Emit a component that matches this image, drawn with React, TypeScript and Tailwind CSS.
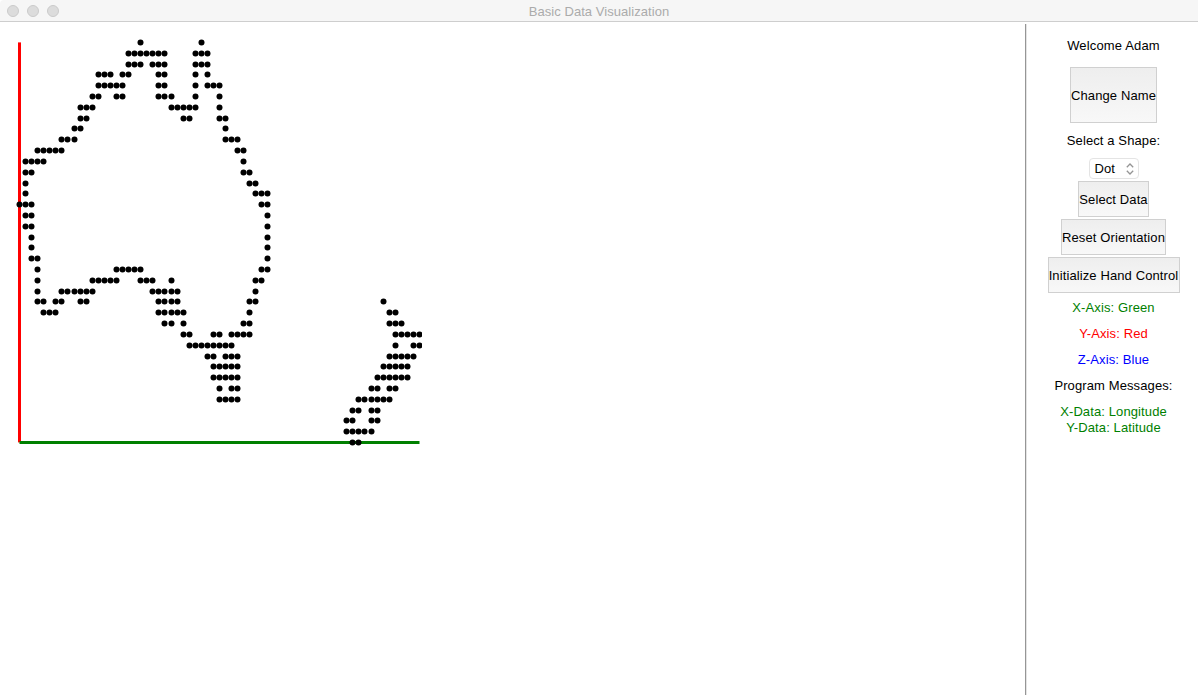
import React from "react";

// Each entry is one latitude row, listing inclusive [first, last] longitude columns.
const ROWS: number[][][] = [
  [[20, 20], [30, 30]],
  [[18, 24], [29, 31]],
  [[18, 20], [22, 24], [29, 31]],
  [[13, 15], [17, 18], [23, 24], [29, 29], [31, 31]],
  [[13, 17], [23, 24], [29, 29], [31, 33]],
  [[12, 13], [16, 17], [23, 25], [29, 29], [33, 33]],
  [[10, 12], [25, 29], [33, 33]],
  [[10, 11], [27, 28], [33, 34]],
  [[9, 10], [34, 34]],
  [[7, 9], [34, 36]],
  [[3, 7], [36, 37]],
  [[1, 4], [37, 37]],
  [[1, 2], [37, 38]],
  [[1, 1], [38, 39]],
  [[1, 1], [39, 41]],
  [[0, 2], [40, 41]],
  [[1, 2], [41, 41]],
  [[1, 2], [41, 41]],
  [[2, 2], [41, 41]],
  [[2, 2], [41, 41]],
  [[2, 3], [41, 41]],
  [[3, 3], [16, 20], [40, 41]],
  [[3, 3], [12, 16], [20, 22], [25, 25], [39, 40]],
  [[3, 3], [7, 12], [22, 26], [39, 39]],
  [[3, 4], [6, 7], [10, 11], [23, 26], [38, 39], [60, 60]],
  [[4, 6], [23, 27], [38, 38], [61, 62]],
  [[24, 25], [27, 27], [37, 38], [61, 63]],
  [[27, 28], [32, 33], [35, 38], [62, 66]],
  [[28, 35], [62, 62], [65, 66]],
  [[31, 32], [34, 36], [61, 65]],
  [[32, 36], [60, 64]],
  [[32, 36], [59, 64]],
  [[33, 33], [35, 36], [58, 59], [61, 62]],
  [[33, 36], [56, 61]],
  [[55, 56], [58, 59]],
  [[54, 55], [58, 59]],
  [[54, 58]],
  [[55, 56]],
];

const SIZE = 400;
const COLUMN_STEP = SIZE / 66;
const ROW_STEP = SIZE / 37;

function Plot() {
  return (
    <svg width="422" height="445" viewBox="0 22 422 445" className="block">
      <rect x="18" y="42.4" width="3" height="400" fill="#ff0000" />
      <rect x="19.5" y="441" width="400" height="3" fill="#008000" />
      {ROWS.flatMap((runs, row) =>
        runs.flatMap(([first, last]) =>
          Array.from({ length: last - first + 1 }, (_, i) => (
            <circle
              key={`${row}-${first + i}`}
              cx={19.5 + Math.round((first + i) * COLUMN_STEP)}
              cy={42.5 + Math.round(row * ROW_STEP)}
              r="3"
              fill="#000"
            />
          )),
        ),
      )}
    </svg>
  );
}

function PanelButton({ label, className }: { label: string; className: string }) {
  return (
    <button
      className={`flex shrink-0 items-center justify-center whitespace-nowrap border border-[#d0d0d0] bg-linear-to-b from-[#eeeeee] to-[#f8f8f8] pt-0.5 ${className}`}
    >
      {label}
    </button>
  );
}

export default function App() {
  return (
    <div className="flex h-[697px] w-[1198px] flex-col overflow-hidden bg-white font-['Liberation_Sans',Arial,sans-serif] text-[13px] leading-4 tracking-[0.11px] text-black">
      <header className="grid h-[22px] shrink-0 grid-cols-[1fr_auto_1fr] items-center rounded-tl-[4px] border-b border-[#cecece] bg-[#f6f6f6]">
        <div className="flex gap-2 pl-[7px]">
          <span className="size-3 rounded-full border border-[#cbcbcb] bg-[#dcdcdc]" />
          <span className="size-3 rounded-full border border-[#cbcbcb] bg-[#dcdcdc]" />
          <span className="size-3 rounded-full border border-[#cbcbcb] bg-[#dcdcdc]" />
        </div>
        <h1 className="pt-[3px] tracking-[0.05px] text-[#ababab]">Basic Data Visualization</h1>
      </header>
      <div className="flex min-h-0 flex-1">
        <main className="w-[1025px] shrink-0">
          <Plot />
        </main>
        <div className="mt-0.5 mb-0.5 w-0.5 shrink-0 border-l border-[#969696] bg-[#e4e4e4]" />
        <aside className="flex w-[171px] flex-col items-center pl-0.5 pt-4 text-center">
          <p className="tracking-[0.16px]">Welcome Adam</p>
          <PanelButton label="Change Name" className="mt-[13px] h-14 w-[87px]" />
          <p className="mt-[10px]">Select a Shape:</p>
          <button className="mt-[9px] flex h-[21px] w-[50px] shrink-0 items-center justify-between rounded-[4px] border border-[#e4e4e4] bg-white pl-[5px] pr-1">
            <span>Dot</span>
            <svg width="8" height="12" viewBox="0 0 8 12" fill="none" stroke="#949494" strokeWidth="1.3">
              <path d="M0.8 4.2 4 1l3.2 3.2M0.8 7.8 4 11l3.2-3.2" />
            </svg>
          </button>
          <PanelButton label="Select Data" className="mt-0.5 h-9 w-[71px]" />
          <PanelButton label="Reset Orientation" className="mt-0.5 h-9 w-[105px]" />
          <PanelButton label="Initialize Hand Control" className="mt-0.5 h-9 w-[132px]" />
          <p className="mt-[7px] text-[#008000]">X-Axis: Green</p>
          <p className="mt-[10px] text-[#ff0000]">Y-Axis: Red</p>
          <p className="mt-[10px] text-[#0000ff]">Z-Axis: Blue</p>
          <p className="mt-[10px]">Program Messages:</p>
          <p className="mt-[10px] text-[#008000]">
            X-Data: Longitude
            <br />
            Y-Data: Latitude
          </p>
        </aside>
      </div>
    </div>
  );
}
